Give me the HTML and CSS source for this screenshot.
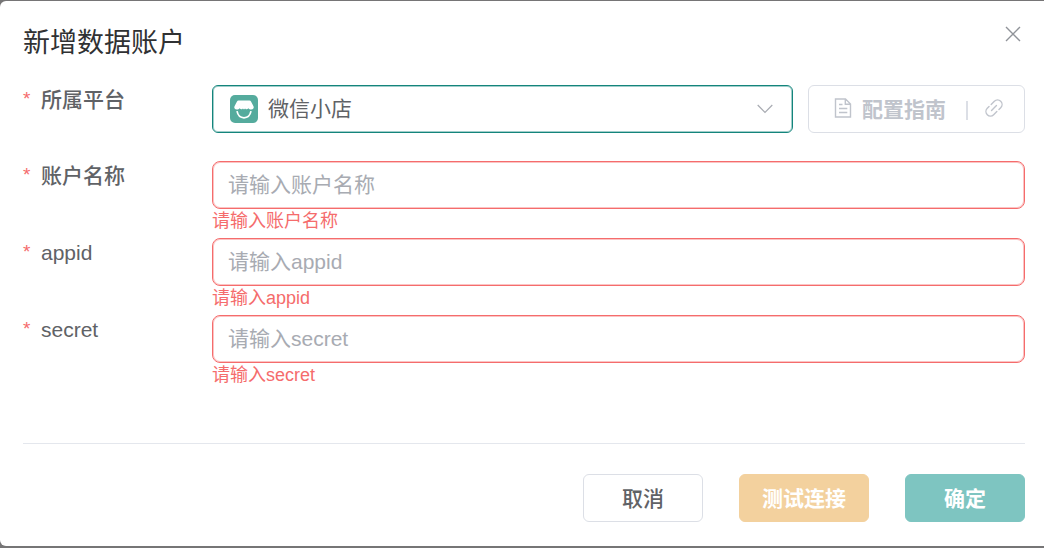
FILE: index.html
```
<!DOCTYPE html>
<html lang="zh-CN">
<head>
  <meta charset="UTF-8" />
  <meta name="viewport" content="width=device-width, initial-scale=1.0"/>
  <title>新增数据账户</title>
  <link rel="stylesheet" href="styles.css">
</head>
<body>

<div class="dialog" role="dialog" aria-labelledby="dialog-title">
  <div class="dialog-header">
    <h1 class="dialog-title" id="dialog-title">新增数据账户</h1>
    <button class="close-button" type="button" aria-label="关闭">
      <svg viewBox="0 0 16 16" width="16" height="16" fill="none" stroke="currentColor" stroke-width="1.4">
        <path d="M1 1l14 14M15 1L1 15"/>
      </svg>
    </button>
  </div>

  <form class="form" id="account-form" novalidate>
    <div class="form-item">
      <label class="form-label" for="platform">所属平台</label>
      <div class="form-content form-row">
        <div class="select-box">
          <svg class="shop-logo" viewBox="0 0 28 28" width="28" height="28">
            <rect width="28" height="28" rx="5" fill="#55ab9d"/>
            <path d="M8.500 5.500h11c.7 0 1.200.3 1.500.9l2.500 4.800c.8 1.700-.4 3.300-2.300 3.300-1.300 0-2.200-.4-2.900-1.200-.9 1.300-2.200 1.300-3.200.1l-1.100 1.100-1.100-1.100c-1 1.200-2.300 1.200-3.200-.1-.7.8-1.600 1.200-2.900 1.200-1.900 0-3.100-1.600-2.300-3.300L7 6.400c.3-.6.8-.9 1.500-.9z" fill="#fff"/>
            <path d="M7 16.200c.8 4 3.500 6.600 7 6.600s6.200-2.600 7-6.600" fill="none" stroke="#fff" stroke-width="1.700"/>
          </svg>
          <select class="select" id="platform">
            <option>微信小店</option>
          </select>
          <svg class="select-arrow" viewBox="0 0 16 10" width="16" height="10" fill="none" stroke="currentColor" stroke-width="1.200">
            <path d="M.7 1L8 8.300 15.300 1"/>
          </svg>
        </div>
        <button class="button guide-button" type="button" disabled>
          <svg viewBox="0 0 18 20" width="18" height="20" fill="none" stroke="currentColor" stroke-width="1.400">
            <path d="M1.500 1h10l5 5v13h-15zM11.300 1v5.200h5.200M5 6.500h3.500M5 10.500h8.300M5 14.500h8.300"/>
          </svg>
          <span>配置指南</span>
          <span class="guide-divider"></span>
          <svg viewBox="0 0 20 20" width="20" height="20" fill="none" stroke="currentColor" stroke-width="1.400" stroke-linecap="round">
            <g transform="rotate(-45 10 10)">
              <path d="M6.500 10h7"/>
              <path d="M10.500 5.500h4.500a4.500 4.500 0 0 1 0 9h-2.500"/>
              <path d="M9.500 14.500H5a4.500 4.500 0 0 1 0-9h2.500"/>
            </g>
          </svg>
        </button>
      </div>
    </div>

    <div class="form-item">
      <label class="form-label" for="account-name">账户名称</label>
      <div class="form-content">
        <input class="input" type="text" id="account-name" placeholder="请输入账户名称" aria-describedby="account-name-error"/>
        <div class="form-error" id="account-name-error">请输入账户名称</div>
      </div>
    </div>

    <div class="form-item">
      <label class="form-label" for="appid">appid</label>
      <div class="form-content">
        <input class="input" type="text" id="appid" placeholder="请输入appid" aria-describedby="appid-error"/>
        <div class="form-error" id="appid-error">请输入appid</div>
      </div>
    </div>

    <div class="form-item">
      <label class="form-label" for="secret">secret</label>
      <div class="form-content">
        <input class="input" type="text" id="secret" placeholder="请输入secret" aria-describedby="secret-error"/>
        <div class="form-error" id="secret-error">请输入secret</div>
      </div>
    </div>
  </form>

  <div class="dialog-footer">
    <button class="button" type="button">取消</button>
    <button class="button test-button" type="button" disabled>测试连接</button>
    <button class="button confirm-button" type="submit" form="account-form" disabled>确定</button>
  </div>
</div>

</body>
</html>
```

FILE: styles.css
```
* {
  box-sizing: border-box;
}

body {
  margin: 0;
  padding: 1px 0 2px;
  min-height: 100vh;
  background: #767576;
  font-family: "Liberation Sans", "Noto Sans CJK SC", sans-serif;
  font-size: 21px;
  color: #606266;
}

.dialog {
  padding: 22px 19px 24px 23px;
  background: #fff;
  border-radius: 6px 0 0 6px;
}

.dialog-header {
  display: flex;
  justify-content: space-between;
  align-items: flex-start;
  margin-bottom: 22px;
}

.dialog-title {
  margin: 0;
  font-size: 27px;
  font-weight: 400;
  line-height: 40px;
  color: #303133;
}

.close-button {
  display: flex;
  padding: 3px 4px;
  border: none;
  background: none;
  color: #909399;
  cursor: pointer;
}

.form-item {
  display: flex;
  min-height: 76px;
}

.form-label {
  display: flex;
  flex: 0 0 189px;
  font-weight: 500;
  line-height: 30px;
}

.form-label::before {
  content: "*";
  flex: 0 0 18px;
  color: #f56c6c;
  font-size: 19px;
  font-weight: 400;
  line-height: 28px;
}

.form-content {
  flex: 1;
  min-width: 0;
}

.form-row {
  display: flex;
  align-items: flex-start;
  gap: 15px;
}

.input,
.select {
  display: block;
  width: 100%;
  height: 48px;
  padding: 0 15px;
  border: 1px solid #f56c6c;
  border-radius: 8px;
  box-shadow: inset 0 0 0 1px #f56c6c66;
  background: #fff;
  font-family: inherit;
  font-size: 21px;
  color: #606266;
  outline: none;
}

.input::placeholder {
  color: #a8abb2;
  opacity: 1;
}

.select-box {
  position: relative;
  flex: 1;
}

.select {
  appearance: none;
  padding: 0 48px 2px 55px;
  border-color: #14857c;
  border-radius: 6px;
  box-shadow: inset 0 0 0 1px #14857c66;
}

.shop-logo {
  position: absolute;
  top: 10px;
  left: 18px;
  pointer-events: none;
}

.select-arrow {
  position: absolute;
  top: 19px;
  right: 20px;
  color: #a8abb2;
  pointer-events: none;
}

.form-error {
  margin-bottom: 5px;
  font-size: 18px;
  line-height: 24px;
  color: #f56c6c;
}

.button {
  display: flex;
  justify-content: center;
  align-items: center;
  min-width: 120px;
  height: 48px;
  padding: 0 22px 2px;
  border: 1px solid #dcdfe6;
  border-radius: 6px;
  background: #fff;
  font-family: inherit;
  font-size: 21px;
  font-weight: 500;
  color: #606266;
  cursor: pointer;
}

.button:disabled {
  cursor: not-allowed;
}

.guide-button {
  gap: 10px;
  padding: 0 20px 2px 25px;
  font-weight: 700;
  color: #c0c4cc;
}

.guide-divider {
  width: 2px;
  height: 19px;
  margin: 4px 6px 0 10px;
  background: #dcdfe6;
}

.dialog-footer {
  display: flex;
  justify-content: flex-end;
  gap: 36px;
  margin-top: 51px;
  padding-top: 30px;
  border-top: 1px solid #e4e7ed;
}

.test-button {
  border-color: #f3d19e;
  background: #f3d19e;
  font-weight: 700;
  color: #fff;
}

.confirm-button {
  border-color: #7ec5c1;
  background: #7ec5c1;
  font-weight: 700;
  color: #fff;
}
```
